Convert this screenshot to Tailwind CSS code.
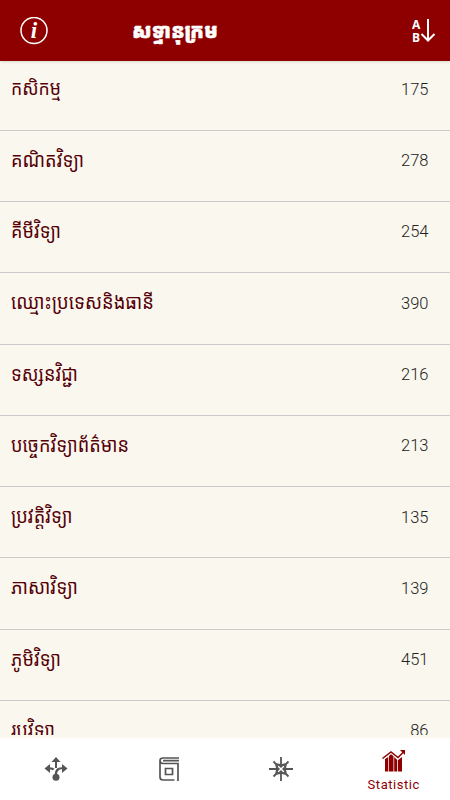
<!DOCTYPE html>
<html lang="km">
<head>
<meta charset="utf-8">
<meta name="viewport" content="width=device-width, initial-scale=1">
<title>សទ្ទានុក្រម</title>
<script src="https://cdn.jsdelivr.net/npm/@tailwindcss/browser@4"></script>
</head>
<body class="w-[450px] h-[800px] overflow-hidden flex flex-col bg-[#faf7ee] font-['Roboto','Noto_Sans_Khmer','Khmer_OS','Noto_Sans',sans-serif]">
<header class="h-[61px] shrink-0 bg-[#8e0000] flex items-center text-white pl-5 pr-[14px] shadow-sm z-10">
  <svg class="w-7 h-7" viewBox="0 0 28 28" fill="none"><circle cx="14" cy="13.500" r="13" stroke="white" stroke-width="1.5"/><text x="14" y="20.500" text-anchor="middle" fill="white" font-family="Liberation Serif, serif" font-size="23" font-style="italic" font-weight="bold">i</text></svg>
  <svg class="w-[90px] h-[40px] ml-[83px]" viewBox="0 0 90 40"><text x="1" y="27" fill="white" stroke="white" stroke-width=".5" font-size="20.500" font-weight="900" textLength="86" lengthAdjust="spacingAndGlyphs">សទ្ទានុក្រម</text></svg>
  <svg class="w-6 h-7 ml-auto" viewBox="0 0 24 28" fill="white"><g font-family="Open Sans, sans-serif" font-weight="700" font-size="12"><text x="0" y="11.500">A</text><text x="0" y="24.500">B</text></g><path d="M16 2V23.500M9.500 17l6.500 6.500 6.500-6.500" fill="none" stroke="white" stroke-width="2"/></svg>
</header>
<main id="list" class="h-[674px] mb-[3px] shrink-0 overflow-hidden"></main>
<footer class="h-[62px] shrink-0 bg-white grid grid-cols-4 text-[#555]">
  <div class="flex justify-center pt-[19px]"><svg class="w-6 h-6" viewBox="0 0 24 24" fill="currentColor"><path d="M12 0l4.500 5H13v6h-2V5H7.500zM.5 11.500L6 7v3.200q3 0 4.500 1.500L9 13.300q-1-.8-3-.8V16zM23.500 11.500L18 7v3.200C12.500 10.200 10.800 13 10.800 18h2.200c0-4 2-5.800 5-5.800V16z"/><circle cx="12" cy="20.300" r="3.500"/></svg></div>
  <div class="flex justify-center pt-[19px]"><svg class="w-6 h-6" viewBox="0 0 24 24" fill="none" stroke="currentColor" stroke-width="1.7"><path d="M22 1H6Q3 1 3 3.500V20q0 3 3 3h11.500M3 3.500Q3 6.500 6 6.500h15v17.500M6 3.700h16M8.500 11.500h7v6h-7z"/></svg></div>
  <div class="flex justify-center pt-[19px]"><svg class="w-6 h-6" viewBox="0 0 24 24" fill="none" stroke="currentColor"><path d="M12 0v10M12 14v10M0 12h10M14 12h10M4.500 4.500l5 5M19.500 4.500l-5 5M4.500 19.500l5-5M19.500 19.500l-5-5" stroke-width="1.800"/><path fill="currentColor" stroke="none" d="M12 11L7 6l4 1h2l4-1zM12 13l-5 5 4-1h2l4 1zM11 12L6 7l1 4v2l-1 4zM13 12l5-5-1 4v2l1 4z"/><path d="M9 9l6 6M15 9l-6 6" stroke="white" stroke-width="1"/></svg></div>
  <div class="flex flex-col items-center pt-[12px] text-[#8e0000]"><svg class="w-6 h-[22px]" viewBox="0 0 24 22" fill="currentColor"><path d="M3 9l3.300-2v14.500H3zM7 6l2-2 2.500 2v15.500H7zM12.200 7l3 3v11.500h-3zM16 10l4-3v14.500h-4z"/><path d="M.5 8.500L9 2l7 5.500L21.500 2" fill="none" stroke="white" stroke-width="3"/><path d="M.5 8.500L9 2l7 5.500L21.500 2" fill="none" stroke="currentColor" stroke-width="1.500"/><path d="M18 0h5v5z"/></svg><span class="mt-[2.500px] text-[13px] leading-[20px] tracking-[0.55px]">Statistic</span></div>
</footer>
<script>
const rows = [["កសិកម្ម",175,50],["គណិតវិទ្យា",278,73],["គីមីវិទ្យា",254,50],["ឈ្មោះប្រទេសនិងធានី",390,143],["ទស្សនវិជ្ជា",216,67],["បច្ចេកវិទ្យាព័ត៌មាន",213,118],["ប្រវត្តិវិទ្យា",135,61.5],["ភាសាវិទ្យា",139,67],["ភូមិវិទ្យា",451,50],["រូបវិទ្យា",86,44]];
document.getElementById("list").innerHTML = rows.map(([t,n,w]) => `
<div class="h-[71.3px] -mt-[1.7px] mb-[1.7px] flex items-start justify-between pl-[11px] pr-[21.5px] border-b border-[#cacaca] text-[#550008]">
<svg class="w-[200px] h-[60px]" viewBox="0 0 200 60"><text x="0" y="36" font-size="20.5" font-weight="400" textLength="${w}" lengthAdjust="spacingAndGlyphs" fill="currentColor">${t}</text></svg>
<span class="mt-[19.5px] text-[16.5px] leading-[22px] font-light text-[#222]">${n}</span></div>`).join("");
</script>
</body>
</html>
